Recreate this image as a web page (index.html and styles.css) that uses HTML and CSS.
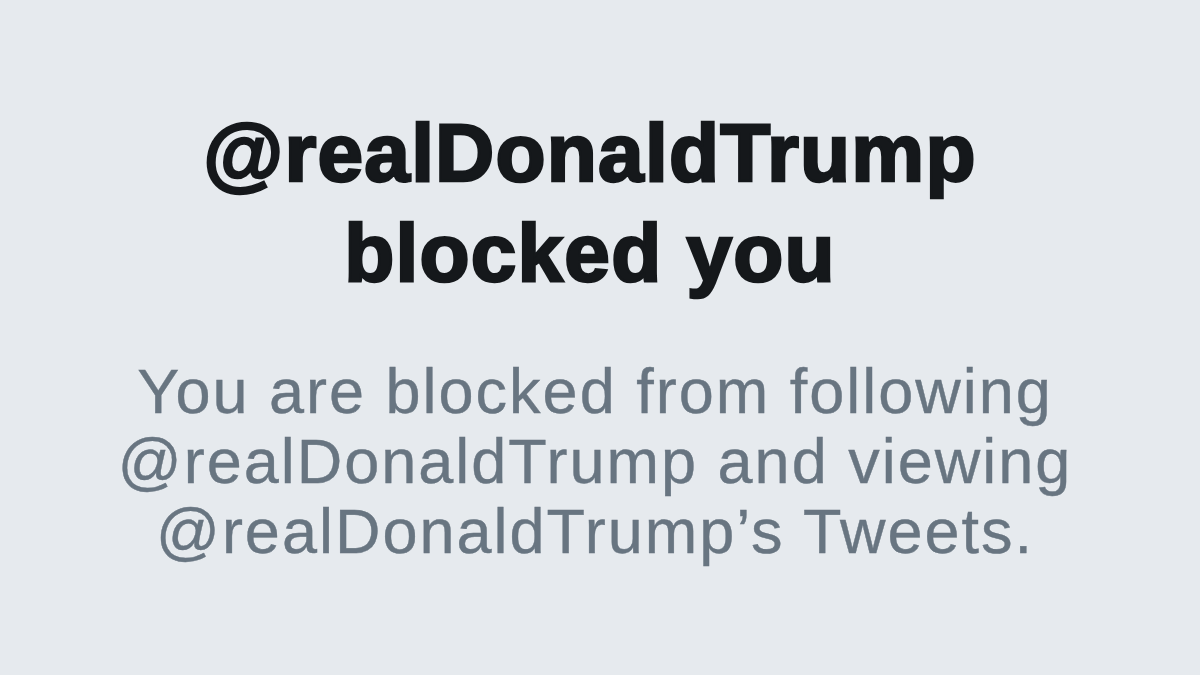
FILE: index.html
```html
<!DOCTYPE html>
<html lang="en">
<head>
<meta charset="utf-8">
<title>Blocked</title>
<link rel="stylesheet" href="styles.css">
</head>
<body>
<main class="screen">
  <h1 class="title">@realDonaldTrump<br>blocked you</h1>
  <p class="message">You are blocked from following<br>@realDonaldTrump and viewing<br>@realDonaldTrump’s Tweets.</p>
</main>
</body>
</html>
```
FILE: styles.css
```css
html, body {
  margin: 0;
  padding: 0;
  background: #e6eaee;
}
.screen {
  width: 1200px;
  height: 675px;
  box-sizing: border-box;
  padding: 103px 10px 0 0;
  display: flex;
  flex-direction: column;
  align-items: center;
  text-align: center;
  overflow: hidden;
}
.title {
  margin: 0;
  padding-right: 10px;
  font-family: "Liberation Sans", Arial, sans-serif;
  font-weight: 700;
  font-size: 82px;
  line-height: 100px;
  color: #15181b;
  letter-spacing: 1.2px;
  -webkit-text-stroke: 2.6px #15181b;
}
.message {
  margin: 53px 0 0;
  font-family: "Liberation Sans", Arial, sans-serif;
  font-weight: 400;
  font-size: 63px;
  line-height: 70px;
  letter-spacing: 2px;
  color: #687581;
  -webkit-text-stroke: 0.4px #687581;
}
```
